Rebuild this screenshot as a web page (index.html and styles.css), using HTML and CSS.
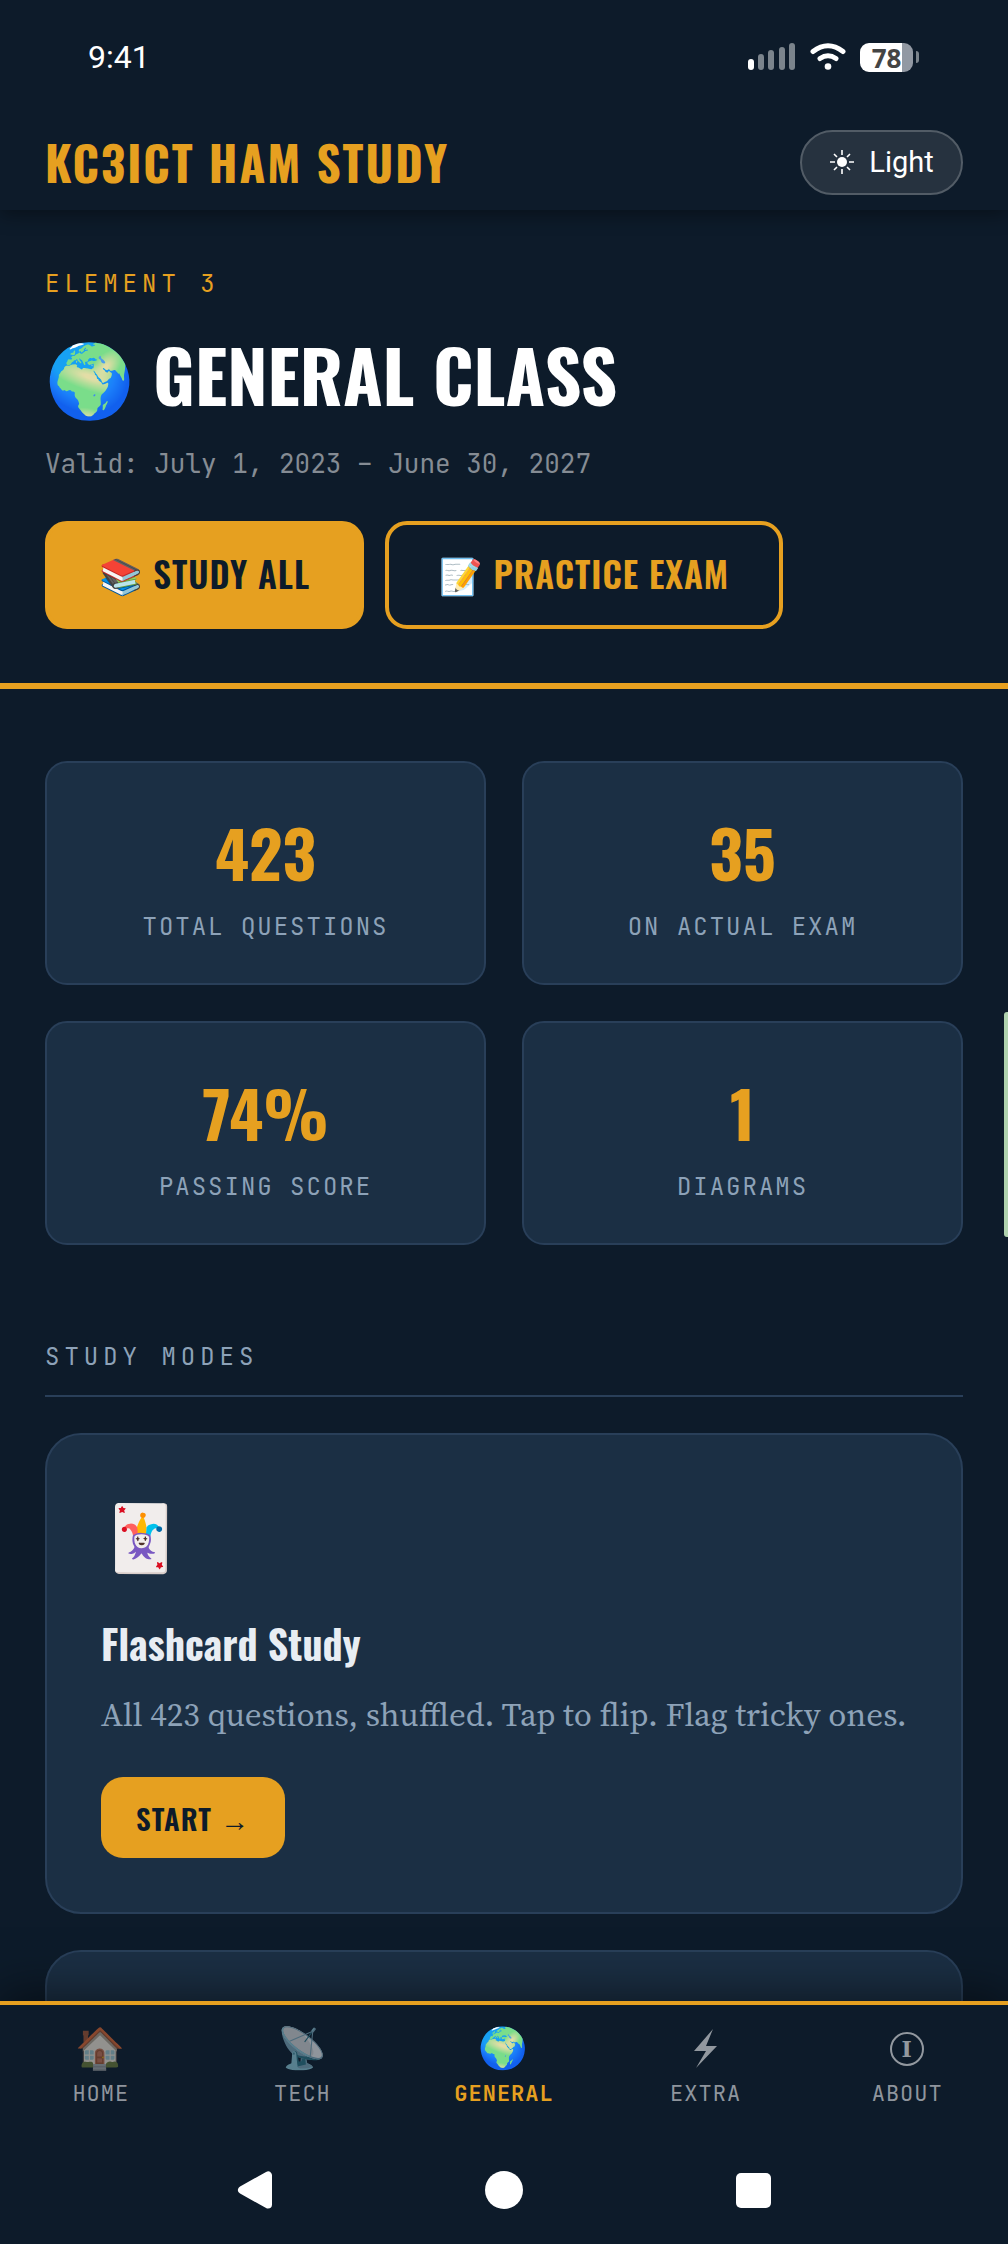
FILE: index.html
```html
<!DOCTYPE html>
<html lang="en">
<head>
<meta charset="utf-8">
<meta name="viewport" content="width=device-width, initial-scale=1">
<title>KC3ICT Ham Study</title>
<link rel="stylesheet" href="styles.css">
</head>
<body>
<div class="app">
  <div class="status">
    <span class="time">9:41</span>
    <div class="status-icons">
      <svg width="48" height="28" viewBox="0 0 48 28" aria-hidden="true">
        <rect x="0" y="16" width="6" height="11" rx="3" fill="#fff"/>
        <g fill="#7b848c"><rect x="10" y="11" width="6" height="16" rx="3"/><rect x="20" y="7" width="6" height="20" rx="3"/><rect x="31" y="4" width="6" height="23" rx="3"/><rect x="41" y="0" width="6" height="27" rx="3"/></g>
      </svg>
      <svg width="36" height="28" viewBox="0 0 36 28" fill="none" stroke="#fff" stroke-width="5" stroke-linecap="round" aria-hidden="true">
        <path d="M3 8.500Q18-3 33 8.500M10 15.500Q18 10 26 15.500"/><circle cx="18" cy="23.500" r="3.300" fill="#fff" stroke="none"/>
      </svg>
      <div class="battery"><span class="cell">78</span><span class="tip"></span></div>
    </div>
  </div>
  <header class="header">
    <a class="brand" href="#">KC3ICT HAM STUDY</a>
    <button class="theme" type="button">
      <svg width="26" height="26" viewBox="0 0 26 26" stroke="#fff" stroke-width="1.600" aria-hidden="true"><circle cx="13" cy="13" r="5" fill="#fff" stroke="none"/><path d="M13 1v5M13 20v5M1 13h5M20 13h5M5 5l3 3M18 18l3 3M5 21l3-3M18 8l3-3"/></svg>
      Light
    </button>
  </header>
  <main class="main">
    <section class="hero">
      <p class="eyebrow">ELEMENT 3</p>
      <h1 class="title"><span class="emoji">🌍</span> GENERAL CLASS</h1>
      <p class="valid">Valid: July 1, 2023 – June 30, 2027</p>
      <div class="actions">
        <button class="btn btn-solid" type="button"><span class="emoji">📚</span> STUDY ALL</button>
        <button class="btn btn-line" type="button"><span class="emoji">📝</span> PRACTICE EXAM</button>
      </div>
    </section>
    <section class="content">
      <div class="stats">
        <div class="stat"><span class="num">423</span><span class="label">TOTAL QUESTIONS</span></div>
        <div class="stat"><span class="num">35</span><span class="label">ON ACTUAL EXAM</span></div>
        <div class="stat"><span class="num">74%</span><span class="label">PASSING SCORE</span></div>
        <div class="stat"><span class="num">1</span><span class="label">DIAGRAMS</span></div>
      </div>
      <h2 class="section-title">STUDY MODES</h2>
      <div class="modes">
        <article class="mode">
          <span class="mode-icon emoji">🃏</span>
          <h3 class="mode-title">Flashcard Study</h3>
          <p class="mode-text">All 423 questions, shuffled. Tap to flip. Flag tricky ones.</p>
          <button class="start" type="button">START →</button>
        </article>
        <article class="mode"></article>
      </div>
    </section>
  </main>
  <footer class="footer">
    <nav class="tabs">
      <a class="tab" href="#"><span class="tab-icon emoji">🏠</span>HOME</a>
      <a class="tab" href="#"><span class="tab-icon emoji">📡</span>TECH</a>
      <a class="tab active" href="#"><span class="tab-icon emoji">🌍</span>GENERAL</a>
      <a class="tab" href="#"><span class="tab-icon"><svg width="24" height="40" viewBox="0 0 24 40" fill="#fff" aria-hidden="true"><path d="M19 0 0 22h12L2 39 23 17H12z"/></svg></span>EXTRA</a>
      <a class="tab" href="#"><span class="tab-icon"><span class="info">I</span></span>ABOUT</a>
    </nav>
    <div class="system">
      <button class="sys" type="button" aria-label="Back"><svg width="36" height="38" viewBox="0 0 36 38" fill="#fff" stroke="#fff" stroke-width="8" stroke-linejoin="round"><path d="M5 19 31 4.500v29z"/></svg></button>
      <button class="sys" type="button" aria-label="Home"><svg width="38" height="38" viewBox="0 0 38 38" fill="#fff"><circle cx="19" cy="19" r="19"/></svg></button>
      <button class="sys" type="button" aria-label="Recent apps"><svg width="35" height="35" viewBox="0 0 35 35" fill="#fff"><rect width="35" height="35" rx="5"/></svg></button>
    </div>
  </footer>
  <div class="edge"></div>
</div>
</body>
</html>
```
FILE: styles.css
```css
:root {
  --bg: #0d1b2a;
  --card: #1b2f44;
  --line: #293f59;
  --gold: #e6a020;
  --muted: #8da2b8;
  --display: Oswald, "Liberation Sans", sans-serif;
  --mono: "JetBrains Mono", "Liberation Mono", monospace;
}
* { box-sizing: border-box; }
body { margin: 0; background: var(--bg); color: #fff; font-family: Roboto, sans-serif; }
h1, h2, h3, p { margin: 0; }
a { text-decoration: none; }
button { font: inherit; color: inherit; border: 0; background: none; padding: 0; }
.emoji { font-family: "Noto Color Emoji", sans-serif; }
.app { position: relative; height: 100vh; display: flex; flex-direction: column; overflow: hidden; }

.status { position: relative; z-index: 2; display: flex; justify-content: space-between; align-items: center; padding: 0 89px 0 88px; height: 114px; background: var(--bg); }
.time { font-size: 32px; line-height: 42px; }
.status-icons { display: flex; align-items: center; gap: 14px; }
.battery { display: flex; align-items: center; gap: 3px; }
.cell { width: 53px; height: 29px; border-radius: 9px; background: linear-gradient(90deg, #fff 79%, #9299a3 79%); color: #444; font: 700 26px/30px "Open Sans", sans-serif; text-align: center; }
.tip { width: 3px; height: 12px; border-radius: 0 3px 3px 0; background: #7b848c; }

.header { position: relative; z-index: 1; display: flex; justify-content: space-between; align-items: center; height: 96px; padding: 0 45px; background: var(--bg); box-shadow: 0 4px 18px rgba(0, 0, 0, .4); }
.brand { color: var(--gold); font: 700 47px/64px var(--display); letter-spacing: 2px; }
.theme { display: flex; align-items: center; justify-content: center; gap: 14px; width: 163px; height: 65px; border: 2px solid #525c66; border-radius: 33px; background: #26323f; font-size: 29px; }

.main { flex: 1; min-height: 0; overflow: hidden; }
.hero { padding: 56px 45px 54px; border-bottom: 6px solid var(--gold); }
.eyebrow { color: var(--gold); font: 24px/36px var(--mono); letter-spacing: 5px; }
.title { margin-top: 22px; font: 700 72px/100px var(--display); }
.valid { margin-top: 12px; color: #858c94; font: 26px/40px var(--mono); }
.actions { display: flex; gap: 21px; margin-top: 37px; }
.btn { height: 108px; padding: 0 50px; border: 4px solid var(--gold); border-radius: 22px; font: 600 35px/48px var(--display); letter-spacing: 1px; }
.btn-solid { background: var(--gold); color: var(--bg); }
.btn-line { color: var(--gold); }

.content { padding: 72px 45px 0; }
.stats { display: grid; grid-template-columns: 1fr 1fr; gap: 36px; }
.stat { display: flex; flex-direction: column; align-items: center; height: 224px; padding-top: 53px; border: 2px solid var(--line); border-radius: 22px; background: var(--card); }
.num { color: var(--gold); font: 700 65px/72px var(--display); }
.label { margin-top: 23px; color: var(--muted); font: 24px/32px var(--mono); letter-spacing: 2px; }
.section-title { margin-top: 92px; padding-bottom: 18px; border-bottom: 2px solid var(--line); color: var(--muted); font: 24px/40px var(--mono); letter-spacing: 5px; }
.modes { display: grid; gap: 36px; margin-top: 36px; }
.mode { min-height: 481px; padding: 54px; border: 2px solid var(--line); border-radius: 36px; background: var(--card); }
.mode-icon { display: block; font-size: 64px; line-height: 100px; }
.mode-title { margin-top: 26px; color: #e8edf3; font: 700 40px/56px var(--display); }
.mode-text { margin-top: 20px; color: var(--muted); font: 33px/48px "Source Serif 4", "Noto Serif", "Liberation Serif", serif; }
.start { height: 81px; margin-top: 38px; padding: 0 35px; border-radius: 22px; background: var(--gold); color: var(--bg); font: 600 29px/40px var(--display); letter-spacing: 1px; }

.footer { position: relative; z-index: 1; border-top: 4px solid var(--gold); background: var(--bg); box-shadow: 0 -8px 44px rgba(0, 0, 0, .5); }
.tabs { display: grid; grid-template-columns: repeat(5, 1fr); height: 131px; padding-top: 18px; }
.tab { display: flex; flex-direction: column; align-items: center; gap: 5px; color: #8f959d; font: 22px/28px var(--mono); letter-spacing: 1px; }
.tab-icon { display: flex; align-items: center; justify-content: center; height: 52px; font-size: 40px; opacity: .55; }
.active { color: var(--gold); font-weight: 600; }
.active .tab-icon { opacity: 1; }
.info { width: 34px; height: 34px; border: 2px solid #fff; border-radius: 50%; color: #fff; font: 700 22px/30px "DejaVu Serif", serif; text-align: center; }
.system { display: grid; grid-template-columns: repeat(3, 1fr); height: 108px; padding: 0 130px; }
.sys { display: flex; align-items: center; justify-content: center; }
.edge { position: absolute; right: 0; top: 1012px; width: 4px; height: 225px; border-radius: 3px 0 0 3px; background: #b0d2ae; }
```
